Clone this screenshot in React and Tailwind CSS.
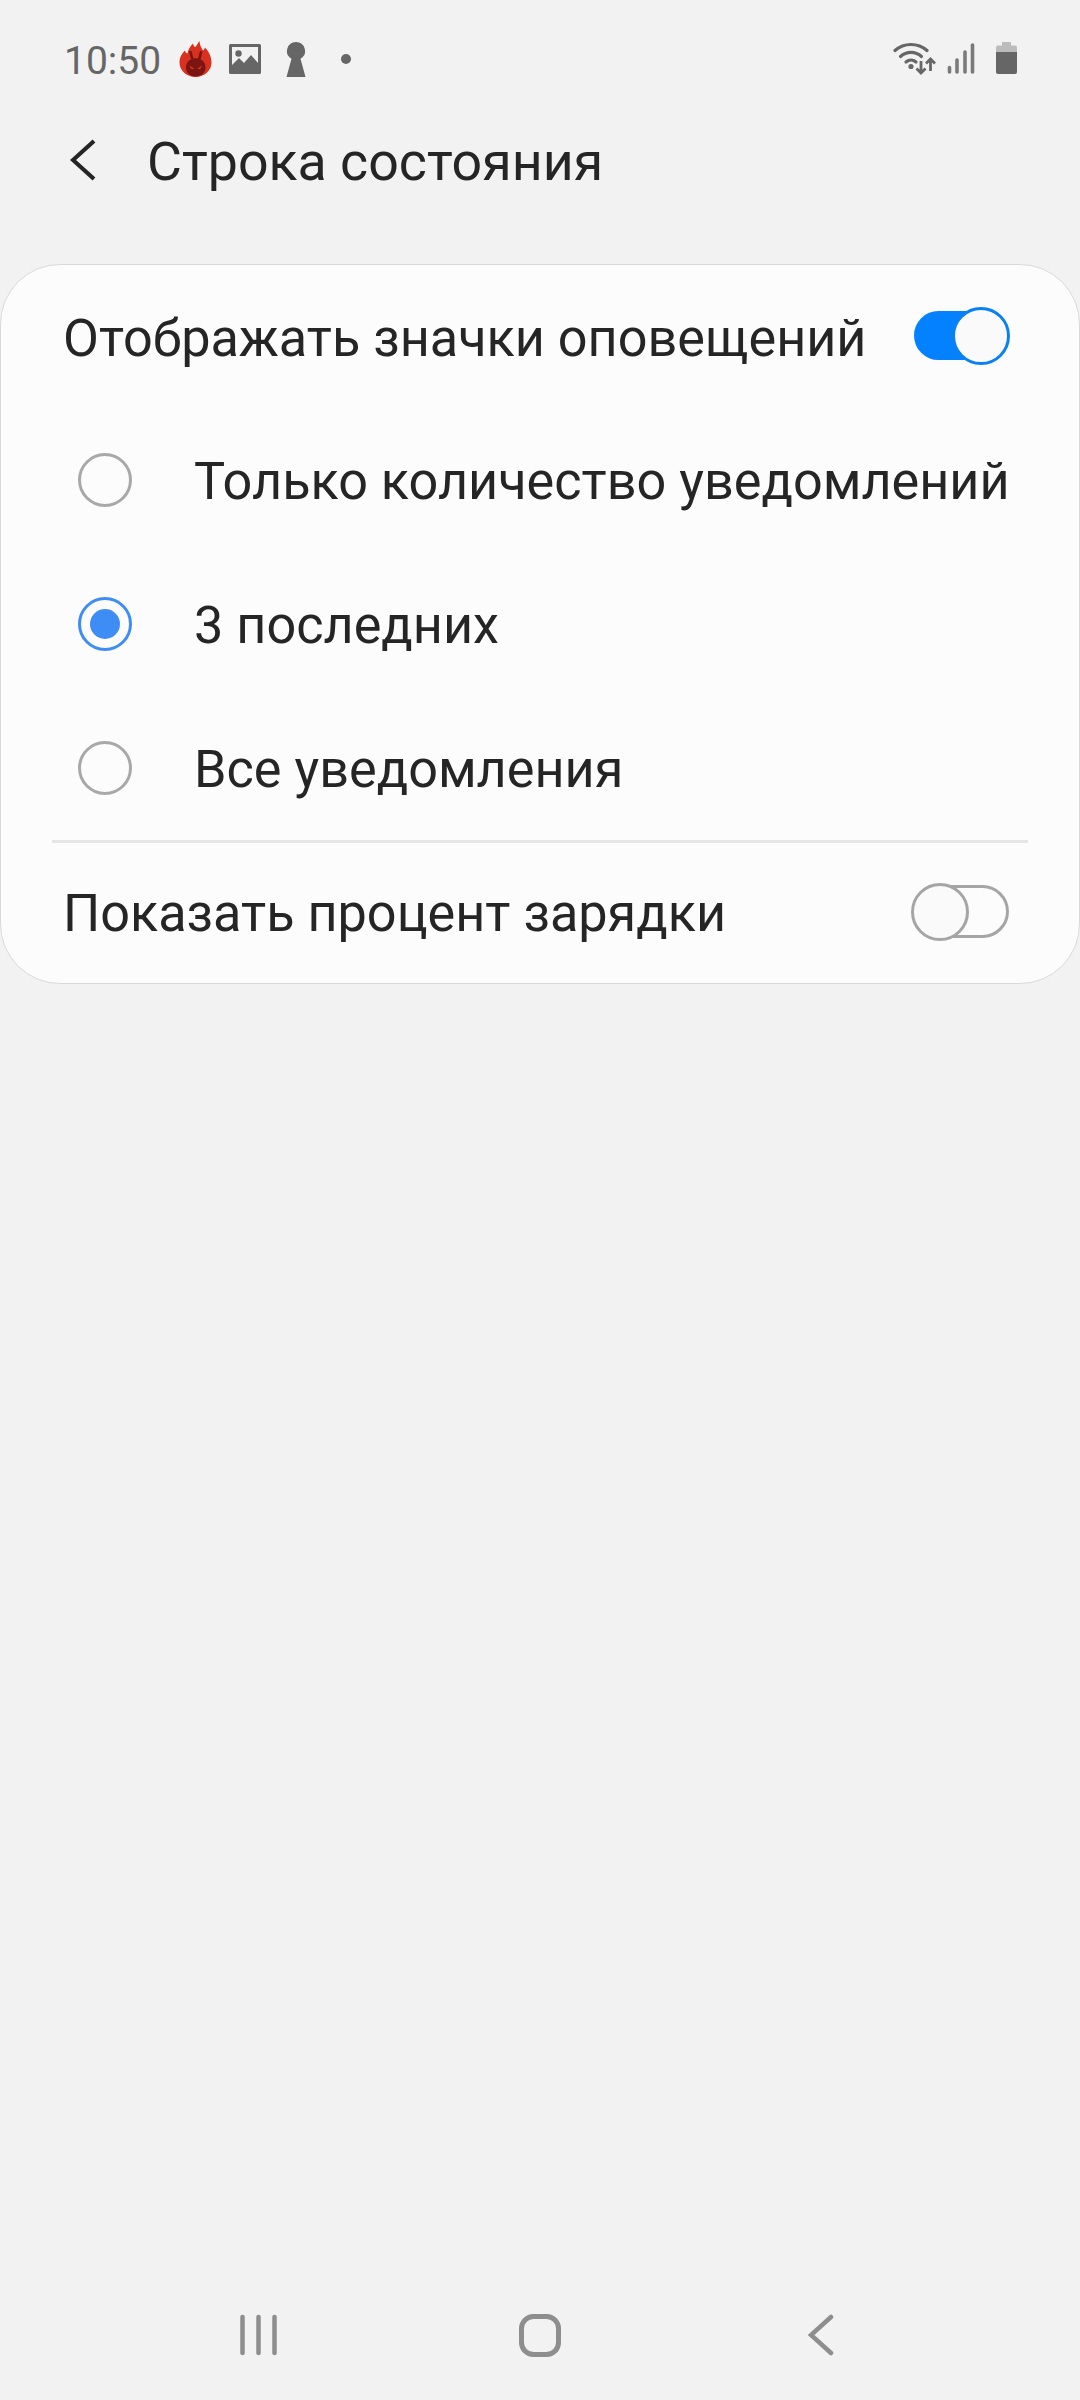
const font = { fontFamily: 'Roboto, "Noto Sans", sans-serif' };

function Flame() {
  return (
    <svg width="33" height="36" viewBox="0 0 33 36" className="ml-[18px]">
      <path d="M16.5 36C7.5 36 .5 29.500 .5 21.500C.5 16 3 12.500 6 9.500C6.500 11.500 7.500 12.500 8.500 12.500C9 8.500 11.500 5 14 2.500C14.500 5 15.500 6 16.500 6C17.500 4.500 19 2 20.500 0C20.500 3.500 22 6.500 24 9.500C25 8.500 25.500 8 26 6.500C29.500 10.500 32.500 15 32.500 21.500C32.500 29.500 25.500 36 16.500 36Z" fill="#d9311f" />
      <path d="M7 26.500C7 22 9.500 19.500 12 18.500L10 10.500L12.500 10L14.500 17.500C16 17.200 17.500 17.200 19 17.500L21 10L23.500 10.500L21.500 18.500C24 19.500 26.500 22 26.500 26.500C26.500 32 22 35.500 16.500 35.500C11 35.500 7 32 7 26.500Z" fill="#7a1512" />
      <path d="M10.500 24.500L15 27.500C14 29 11 28 10.500 24.500ZM23 24.500L18.500 27.500C19.500 29 22.500 28 23 24.500Z" fill="#d9311f" />
    </svg>
  );
}

function Picture() {
  return (
    <svg width="32" height="30" viewBox="0 0 32 30" className="ml-[17px]">
      <path fillRule="evenodd" d="M1.500 0H30.500A1.500 1.500 0 0 1 32 1.500V28.500A1.500 1.500 0 0 1 30.500 30H1.500A1.500 1.500 0 0 1 0 28.500V1.500A1.500 1.500 0 0 1 1.500 0ZM3 3V21L10 14L15 19L22 11L29 19V3Z" fill="#666666" />
      <circle cx="9.500" cy="9.500" r="3.200" fill="#666666" />
    </svg>
  );
}

function Keyhole() {
  return (
    <svg width="20" height="35" viewBox="0 0 20 35" className="ml-[25px]">
      <path d="M10 0A9 9 0 0 1 14.500 16.800L19.500 35H.500L5.500 16.800A9 9 0 0 1 10 0Z" fill="#666666" />
    </svg>
  );
}

function Wifi() {
  return (
    <svg width="44" height="33" viewBox="0 0 44 33" className="mb-[2px]">
      <g fill="none" stroke="#666666" strokeWidth="3.200" strokeLinecap="round">
        <path d="M2 8.500C11 .5 25 .5 34 8.500" />
        <path d="M7.500 14.500C13.500 9 22.500 9 28.500 14.500" />
        <path d="M13 20C16 17.500 20 17.500 23 20" />
      </g>
      <circle cx="18" cy="24.500" r="2.600" fill="#666666" />
      <g fill="none" stroke="#666666" strokeWidth="2.800">
        <path d="M28 19V31M23.500 26.500L28 31L32.500 26.500" />
        <path d="M37.500 29V17M33 21.500L37.500 17L42 21.500" />
      </g>
    </svg>
  );
}

function Signal() {
  return (
    <svg width="28" height="31" viewBox="0 0 28 31" className="mb-[1px] ml-[10px]">
      <g stroke="#666666" strokeWidth="3.600" strokeLinecap="round">
        <path d="M2.500 24.500V29" opacity=".85" />
        <path d="M10 17V29" opacity=".85" />
        <path d="M18 9V29" opacity=".85" />
        <path d="M25.500 2V29" opacity=".85" />
      </g>
    </svg>
  );
}

function Battery() {
  return (
    <svg width="21" height="32" viewBox="0 0 21 32" className="mb-[2px] ml-[21px]">
      <path d="M6 0H15V3.500H19A2 2 0 0 1 21 5.500V10H0V5.500A2 2 0 0 1 2 3.500H6Z" fill="#bcbcbc" />
      <path d="M0 10H21V30A2 2 0 0 1 19 32H2A2 2 0 0 1 0 30Z" fill="#666666" />
    </svg>
  );
}

function Radio({ checked }) {
  return (
    <span className={`flex h-[54px] w-[54px] shrink-0 items-center justify-center rounded-full border-[3px] ${checked ? 'border-[#3e8df5]' : 'border-[#a8a8a8]'}`}>
      {checked && <span className="h-[30px] w-[30px] rounded-full bg-[#3e8df5]" />}
    </span>
  );
}

function OptionRow({ label, checked }) {
  return (
    <div className="flex h-[144px] items-center pl-[77px]">
      <Radio checked={checked} />
      <span className="ml-[62px] mt-[5px] whitespace-nowrap text-[52.200px] leading-none text-[#252525]">{label}</span>
    </div>
  );
}

function Toggle({ on }) {
  if (on) {
    return (
      <span className="relative mb-[3px] mr-[74px] block h-[49px] w-[91px] rounded-full bg-[#0381fe]">
        <span className="absolute left-[38px] top-[-4px] h-[58px] w-[58px] rounded-full border-[3px] border-[#0a80f5] bg-[#fafafa]" />
      </span>
    );
  }
  return (
    <span className="relative mb-[3px] mr-[70px] block h-[53px] w-[97px] rounded-full border-[3px] border-[#a5a5a5]">
      <span className="absolute left-[-4px] top-[-5px] h-[58px] w-[58px] rounded-full border-[3px] border-[#a5a5a5] bg-[#fafafa]" />
    </span>
  );
}

function SwitchRow({ label, on, height, nudge }) {
  return (
    <div className={`flex items-center justify-between pl-[62px] ${height}`}>
      <span className={`whitespace-nowrap text-[52.200px] leading-none text-[#252525] ${nudge}`}>{label}</span>
      <Toggle on={on} />
    </div>
  );
}

export default function App() {
  return (
    <div className="flex h-[2400px] w-[1080px] flex-col overflow-hidden bg-[#f2f2f2]" style={font}>
      {/* status bar */}
      <div className="flex h-[118px] items-center pl-[64px] pr-[63px]">
        <span className="mt-[4px] text-[39px] leading-none text-[#666666]">10:50</span>
        <Flame />
        <Picture />
        <Keyhole />
        <span className="ml-[35px] h-[10px] w-[10px] rounded-full bg-[#666666]" />
        <span className="flex-1" />
        <Wifi />
        <Signal />
        <Battery />
      </div>

      {/* title row */}
      <div className="flex h-[84px] items-center pl-[70px]">
        <svg width="26" height="42" viewBox="0 0 26 42">
          <path d="M24 2L3 21L24 40" fill="none" stroke="#252525" strokeWidth="4.200" />
        </svg>
        <span className="ml-[51px] mt-[3px] whitespace-nowrap text-[53.700px] leading-none text-[#252525]">Строка состояния</span>
      </div>

      {/* settings card */}
      <div className="mt-[62px] h-[720px] rounded-[60px] border border-[#d9d9d9] bg-[#fcfcfc]">
        <SwitchRow label="Отображать значки оповещений" on height="h-[143px]" nudge="mt-[5px]" />
        <OptionRow label="Только количество уведомлений" />
        <OptionRow label="3 последних" checked />
        <OptionRow label="Все уведомления" />
        <div className="mx-[51px] h-[3px] bg-[#e6e6e6]" />
        <SwitchRow label="Показать процент зарядки" height="h-[140px]" nudge="mt-[3px]" />
      </div>

      {/* navigation bar */}
      <div className="mt-auto flex h-[130px] items-center pl-[118px]">
        <div className="flex w-[281px] justify-center">
          <svg width="37" height="42" viewBox="0 0 37 42">
            <g stroke="#8e8e8e" strokeWidth="4.500" strokeLinecap="round">
              <path d="M2.500 3V39" />
              <path d="M18.500 3V39" />
              <path d="M34.500 3V39" />
            </g>
          </svg>
        </div>
        <div className="flex w-[281px] justify-center">
          <svg width="42" height="43" viewBox="0 0 42 43">
            <rect x="2.500" y="2.500" width="37" height="38" rx="12" fill="none" stroke="#8e8e8e" strokeWidth="5" />
          </svg>
        </div>
        <div className="flex w-[281px] justify-center">
          <svg width="26" height="42" viewBox="0 0 26 42">
            <path d="M23 3L3 21L23 39" fill="none" stroke="#8e8e8e" strokeWidth="4.500" strokeLinecap="round" />
          </svg>
        </div>
      </div>
    </div>
  );
}
